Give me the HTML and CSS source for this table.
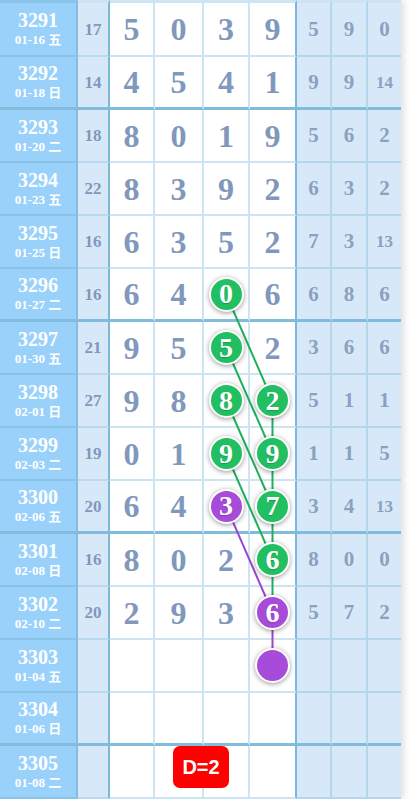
FILE: index.html
```html
<!DOCTYPE html>
<html lang="zh">
<head>
<meta charset="utf-8">
<title>走势图</title>
<link rel="stylesheet" href="styles.css">
</head>
<body>
<div class="board">
  <div class="row first">
    <div class="c issue"><b>3291</b><span>01-16 五</span></div>
    <div class="c sum">17</div>
    <div class="c d">5</div><div class="c d">0</div><div class="c d">3</div><div class="c d d4">9</div>
    <div class="c r">5</div><div class="c r">9</div><div class="c r r3">0</div>
  </div>
  <div class="row thick">
    <div class="c issue"><b>3292</b><span>01-18 日</span></div>
    <div class="c sum">14</div>
    <div class="c d">4</div><div class="c d">5</div><div class="c d">4</div><div class="c d d4">1</div>
    <div class="c r">9</div><div class="c r">9</div><div class="c r r3 sm">14</div>
  </div>
  <div class="row">
    <div class="c issue"><b>3293</b><span>01-20 二</span></div>
    <div class="c sum">18</div>
    <div class="c d">8</div><div class="c d">0</div><div class="c d">1</div><div class="c d d4">9</div>
    <div class="c r">5</div><div class="c r">6</div><div class="c r r3">2</div>
  </div>
  <div class="row">
    <div class="c issue"><b>3294</b><span>01-23 五</span></div>
    <div class="c sum">22</div>
    <div class="c d">8</div><div class="c d">3</div><div class="c d">9</div><div class="c d d4">2</div>
    <div class="c r">6</div><div class="c r">3</div><div class="c r r3">2</div>
  </div>
  <div class="row">
    <div class="c issue"><b>3295</b><span>01-25 日</span></div>
    <div class="c sum">16</div>
    <div class="c d">6</div><div class="c d">3</div><div class="c d">5</div><div class="c d d4">2</div>
    <div class="c r">7</div><div class="c r">3</div><div class="c r r3 sm">13</div>
  </div>
  <div class="row thick">
    <div class="c issue"><b>3296</b><span>01-27 二</span></div>
    <div class="c sum">16</div>
    <div class="c d">6</div><div class="c d">4</div><div class="c d"><span class="ball g">0</span></div><div class="c d d4">6</div>
    <div class="c r">6</div><div class="c r">8</div><div class="c r r3">6</div>
  </div>
  <div class="row">
    <div class="c issue"><b>3297</b><span>01-30 五</span></div>
    <div class="c sum">21</div>
    <div class="c d">9</div><div class="c d">5</div><div class="c d"><span class="ball g">5</span></div><div class="c d d4">2</div>
    <div class="c r">3</div><div class="c r">6</div><div class="c r r3">6</div>
  </div>
  <div class="row">
    <div class="c issue"><b>3298</b><span>02-01 日</span></div>
    <div class="c sum">27</div>
    <div class="c d">9</div><div class="c d">8</div><div class="c d"><span class="ball g">8</span></div><div class="c d d4"><span class="ball g">2</span></div>
    <div class="c r">5</div><div class="c r">1</div><div class="c r r3">1</div>
  </div>
  <div class="row">
    <div class="c issue"><b>3299</b><span>02-03 二</span></div>
    <div class="c sum">19</div>
    <div class="c d">0</div><div class="c d">1</div><div class="c d"><span class="ball g">9</span></div><div class="c d d4"><span class="ball g">9</span></div>
    <div class="c r">1</div><div class="c r">1</div><div class="c r r3">5</div>
  </div>
  <div class="row thick">
    <div class="c issue"><b>3300</b><span>02-06 五</span></div>
    <div class="c sum">20</div>
    <div class="c d">6</div><div class="c d">4</div><div class="c d"><span class="ball p">3</span></div><div class="c d d4"><span class="ball g">7</span></div>
    <div class="c r">3</div><div class="c r">4</div><div class="c r r3 sm">13</div>
  </div>
  <div class="row">
    <div class="c issue"><b>3301</b><span>02-08 日</span></div>
    <div class="c sum">16</div>
    <div class="c d">8</div><div class="c d">0</div><div class="c d">2</div><div class="c d d4"><span class="ball g">6</span></div>
    <div class="c r">8</div><div class="c r">0</div><div class="c r r3">0</div>
  </div>
  <div class="row">
    <div class="c issue"><b>3302</b><span>02-10 二</span></div>
    <div class="c sum">20</div>
    <div class="c d">2</div><div class="c d">9</div><div class="c d">3</div><div class="c d d4"><span class="ball p">6</span></div>
    <div class="c r">5</div><div class="c r">7</div><div class="c r r3">2</div>
  </div>
  <div class="row">
    <div class="c issue"><b>3303</b><span>01-04 五</span></div>
    <div class="c sum"></div>
    <div class="c d"></div><div class="c d"></div><div class="c d"></div><div class="c d d4"><span class="ball p"></span></div>
    <div class="c r"></div><div class="c r"></div><div class="c r r3"></div>
  </div>
  <div class="row thick">
    <div class="c issue"><b>3304</b><span>01-06 日</span></div>
    <div class="c sum"></div>
    <div class="c d"></div><div class="c d"></div><div class="c d"></div><div class="c d d4"></div>
    <div class="c r"></div><div class="c r"></div><div class="c r r3"></div>
  </div>
  <div class="row">
    <div class="c issue"><b>3305</b><span>01-08 二</span></div>
    <div class="c sum"></div>
    <div class="c d"></div><div class="c d"></div><div class="c d"></div><div class="c d d4"></div>
    <div class="c r"></div><div class="c r"></div><div class="c r r3"></div>
  </div>

  <svg class="links" width="401" height="799" viewBox="0 0 401 799">
    <g class="lg">
      <path d="M226 294 L272.5 400.5"/>
      <path d="M226 347.5 L272.5 453.5"/>
      <path d="M226 400.5 L272.5 506"/>
      <path d="M226 453.5 L272.5 559.5"/>
      <path d="M272.5 400.5 V612.5"/>
    </g>
    <g class="lp">
      <path d="M226 506 L272.5 612.5 V665.5"/>
    </g>
  </svg>
  <div class="badge">D=2</div>
</div>
</body>
</html>
```

FILE: styles.css
```css
html, body {
  margin: 0;
  padding: 0;
  background: #fff;
}

.board {
  position: relative;
  width: 401px;
  box-shadow: 3px 0 7px rgba(0, 0, 0, 0.13);
  font-family: "Liberation Serif", "Noto Sans CJK SC", serif;
  font-weight: bold;
}

.row {
  display: grid;
  grid-template-columns: 78px 32px 45px 49px 46px 47px 35px 36px 33px;
  height: 53px;
}

.row.first {
  height: 57px;
}

.c {
  box-sizing: border-box;
  display: flex;
  align-items: center;
  justify-content: center;
  line-height: 1;
  border-right: 2px solid #cde5f2;
  border-bottom: 2px solid #cde5f2;
}

.row.first .c {
  border-top: 3px solid #cde5f2;
}

.issue {
  flex-direction: column;
  gap: 2px;
  background: #99d1fb;
  color: #fff;
  border-right-color: #86bddf;
  border-bottom-color: #88c3e8;
}

.row.first .issue {
  border-top-color: #88c3e8;
}

.issue b {
  font-size: 20px;
  line-height: 20px;
}

.issue span {
  font-size: 13px;
  line-height: 16px;
}

.sum {
  background: #d7e9f9;
  color: #7f98bb;
  font-size: 17px;
  border-right-color: #7db7d9;
  border-bottom-color: #b8d9ee;
}

.d {
  background: #fff;
  color: #7f98bb;
  font-size: 32px;
}

.d4 {
  border-right-color: #7db7d9;
}

.r {
  background: #d7e9f9;
  color: #8aa1c0;
  font-size: 21px;
  border-right-color: #b5d7ec;
  border-bottom-color: #b5d7ec;
}

.r3 {
  border-right: none;
}

.r.sm {
  font-size: 17px;
}

.row.thick .c {
  border-bottom: 3px solid #82bcdc;
}

.ball {
  position: relative;
  z-index: 2;
  box-sizing: border-box;
  width: 35px;
  height: 35px;
  border-radius: 50%;
  border: 2px solid #fff;
  box-shadow: 0 1px 5px rgba(0, 0, 0, 0.4);
  display: flex;
  align-items: center;
  justify-content: center;
  color: #fff;
  font-size: 28px;
  line-height: 1;
  text-shadow: 0 1px 1px rgba(0, 0, 0, 0.2);
}

.ball.g {
  background: #21bf62;
}

.ball.p {
  background: #a74bd9;
}

.links {
  position: absolute;
  left: 0;
  top: 0;
  z-index: 1;
  pointer-events: none;
}

.links path {
  fill: none;
  stroke-width: 2;
}

.lg path {
  stroke: #1fb05d;
}

.lp path {
  stroke: #9b45cf;
}

.badge {
  position: absolute;
  left: 173px;
  top: 746px;
  z-index: 3;
  width: 56px;
  height: 42px;
  border-radius: 7px;
  background: #ff0000;
  color: #fff;
  font-family: "Liberation Sans", Arial, sans-serif;
  font-weight: bold;
  font-size: 20px;
  display: flex;
  align-items: center;
  justify-content: center;
}
```
